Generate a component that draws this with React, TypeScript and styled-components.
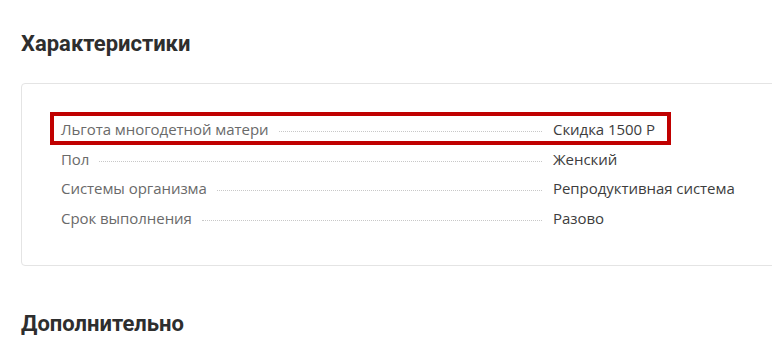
import React from "react";
import styled, { createGlobalStyle } from "styled-components";

interface IFeature {
  label: string;
  value: string;
  highlighted?: boolean;
}

interface IRow {
  highlighted?: boolean;
}

const features: IFeature[] = [
  { label: "Льгота многодетной матери", value: "Скидка 1500 Р", highlighted: true },
  { label: "Пол", value: "Женский" },
  { label: "Системы организма", value: "Репродуктивная система" },
  { label: "Срок выполнения", value: "Разово" },
];

const GlobalStyle = createGlobalStyle`
  html, body {
    margin: 0;
    padding: 0;
    background: #fff;
    overflow: hidden;
  }
`;

export default function App() {
  return (
    <>
      <GlobalStyle />
      <Page>
        <SectionTitle>Характеристики</SectionTitle>
        <Card>
          {features.map((item, index) => (
            <Row key={index} highlighted={item.highlighted}>
              <LabelCell>
                <Label>{item.label}</Label>
                <Leader />
              </LabelCell>
              <Value>{item.value}</Value>
            </Row>
          ))}
        </Card>
        <SectionTitle $next>Дополнительно</SectionTitle>
      </Page>
    </>
  );
}

const Page = styled.div`
  padding: 30px 0 0 21px;
  width: 820px;
`;

const SectionTitle = styled.h2<{ $next?: boolean }>`
  margin: ${(props) => (props.$next ? "44px 0 0" : "0 0 25px")};
  font-family: Roboto, "Liberation Sans", sans-serif;
  font-size: 22px;
  line-height: 28px;
  font-weight: 700;
  color: #2e2e2e;
`;

const Card = styled.div`
  width: 800px;
  border: 1px solid #e4e4e4;
  border-radius: 4px;
  padding: 34px 40px 36px 39px;
  box-sizing: border-box;
  display: flex;
  flex-direction: column;
  gap: 7px;
`;

const Row = styled.div<IRow>`
  position: relative;
  display: flex;
  align-items: flex-start;
  font-family: "Open Sans", "Liberation Sans", sans-serif;
  font-size: 15px;
  line-height: 22.5px;
  letter-spacing: -0.05px;

  &::after {
    content: "";
    display: ${(props) => (props.highlighted ? "block" : "none")};
    position: absolute;
    left: -11px;
    top: -6px;
    bottom: -4px;
    width: 621px;
    box-sizing: border-box;
    border: 4px solid #c00000;
    pointer-events: none;
  }
`;

const LabelCell = styled.div`
  width: 492px;
  flex-shrink: 0;
  display: flex;
  align-items: baseline;
`;

const Label = styled.span`
  color: #6a6a6a;
  white-space: nowrap;
`;

const Leader = styled.span`
  flex: 1;
  margin: 0 11px 0 10px;
  border-bottom: 1px dotted #c8c8c8;
  transform: translateY(-3px);
`;

const Value = styled.span`
  color: #3d3d3d;
  white-space: nowrap;
`;
